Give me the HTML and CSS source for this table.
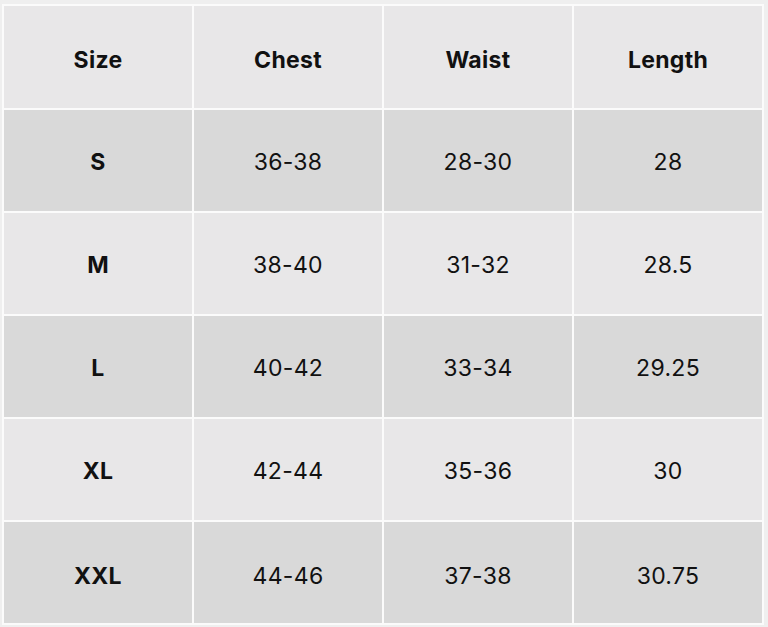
FILE: index.html
```html
<!DOCTYPE html>
<html lang="en">
<head>
<meta charset="utf-8">
<title>Size Chart</title>
<link rel="stylesheet" href="styles.css">
</head>
<body>
<table class="chart">
  <thead>
    <tr class="row light head"><th>Size</th><th>Chest</th><th>Waist</th><th>Length</th></tr>
  </thead>
  <tbody>
    <tr class="row dark"><th>S</th><td>36-38</td><td>28-30</td><td>28</td></tr>
    <tr class="row light"><th>M</th><td>38-40</td><td>31-32</td><td>28.5</td></tr>
    <tr class="row dark"><th>L</th><td>40-42</td><td>33-34</td><td>29.25</td></tr>
    <tr class="row light"><th>XL</th><td>42-44</td><td>35-36</td><td>30</td></tr>
    <tr class="row dark last"><th>XXL</th><td>44-46</td><td>37-38</td><td>30.75</td></tr>
  </tbody>
</table>
</body>
</html>
```
FILE: styles.css
```css
html, body {
  margin: 0;
  padding: 0;
  background: #efefef;
}
body {
  padding: 4px 0 0 2px;
  font-family: "Inter", "Liberation Sans", sans-serif;
  color: #111;
}
.chart {
  border-collapse: separate;
  border-spacing: 2px;
  background: #fbfbfb;
  table-layout: fixed;
  width: 762px;
}
.chart th, .chart td {
  width: 188px;
  height: 101px;
  padding: 2px 0 0;
  box-sizing: border-box;
  text-align: center;
  vertical-align: middle;
  font-size: 23px;
  letter-spacing: 0.3px;
}
.chart th {
  font-weight: 700;
}
.chart td {
  font-weight: 400;
}
.head th {
  height: 102px;
  padding-top: 6px;
}
.last th, .last td {
  padding-top: 6px;
}
.light th, .light td {
  background: #e8e7e8;
}
.dark th, .dark td {
  background: #d9d9d9;
}
```
